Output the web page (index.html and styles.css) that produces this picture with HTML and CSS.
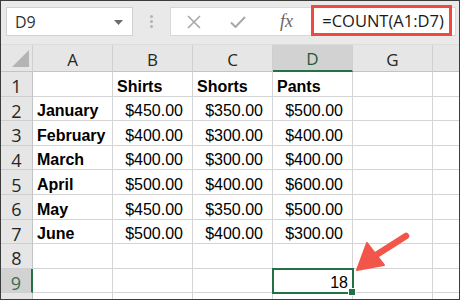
FILE: index.html
```html
<!DOCTYPE html>
<html>
<head>
<meta charset="utf-8">
<link rel="stylesheet" href="styles.css">
</head>
<body>
<div class="frame">
  <div class="toolbar">
    <div class="namebox">
      <span class="nb-text">D9</span>
      <svg class="nb-caret" width="9" height="5" viewBox="0 0 9 5"><path d="M0 0H9L4.5 5Z" fill="#6b6b6b"/></svg>
    </div>
    <div class="grip"><i></i><i></i><i></i></div>
    <div class="fbar">
      <svg class="ic ic-x" width="14" height="14" viewBox="0 0 14 14"><path d="M1 1L13 13M13 1L1 13" stroke="#a8a8a8" stroke-width="1.6" fill="none"/></svg>
      <svg class="ic ic-check" width="16" height="12" viewBox="0 0 16 12"><path d="M1 6.5L5.5 11L15 1" stroke="#a8a8a8" stroke-width="2" fill="none"/></svg>
      <span class="fx">fx</span>
      <div class="formula">=COUNT(A1:D7)</div>
    </div>
  </div>
  <div class="sheet">
    <div class="ch corner"><svg width="17" height="17" viewBox="0 0 17 17"><path d="M17 0V17H0Z" fill="#b4b4b4"/></svg></div>
    <div class="ch">A</div>
    <div class="ch">B</div>
    <div class="ch">C</div>
    <div class="ch sel-col">D</div>
    <div class="ch">G</div>
    <div class="ch last"></div>

    <div class="rh">1</div><div class="c"></div><div class="c b">Shirts</div><div class="c b">Shorts</div><div class="c b">Pants</div><div class="c"></div><div class="c last"></div>
    <div class="rh">2</div><div class="c b">January</div><div class="c n">$450.00</div><div class="c n">$350.00</div><div class="c n">$500.00</div><div class="c"></div><div class="c last"></div>
    <div class="rh">3</div><div class="c b">February</div><div class="c n">$400.00</div><div class="c n">$300.00</div><div class="c n">$400.00</div><div class="c"></div><div class="c last"></div>
    <div class="rh">4</div><div class="c b">March</div><div class="c n">$400.00</div><div class="c n">$300.00</div><div class="c n">$400.00</div><div class="c"></div><div class="c last"></div>
    <div class="rh">5</div><div class="c b">April</div><div class="c n">$500.00</div><div class="c n">$400.00</div><div class="c n">$600.00</div><div class="c"></div><div class="c last"></div>
    <div class="rh">6</div><div class="c b">May</div><div class="c n">$450.00</div><div class="c n">$350.00</div><div class="c n">$500.00</div><div class="c"></div><div class="c last"></div>
    <div class="rh">7</div><div class="c b">June</div><div class="c n">$500.00</div><div class="c n">$400.00</div><div class="c n">$300.00</div><div class="c"></div><div class="c last"></div>
    <div class="rh">8</div><div class="c"></div><div class="c"></div><div class="c"></div><div class="c"></div><div class="c"></div><div class="c last"></div>
    <div class="rh sel-row">9</div><div class="c"></div><div class="c"></div><div class="c"></div><div class="c active">18<span class="handle"></span></div><div class="c"></div><div class="c last"></div>
    <div class="rh"></div><div class="c"></div><div class="c"></div><div class="c"></div><div class="c"></div><div class="c"></div><div class="c last"></div>
  </div>
  <svg class="arrow" width="70" height="60" viewBox="0 0 70 60">
    <path d="M55 6L22 27" stroke="#f2564a" stroke-width="6.5" stroke-linecap="round" fill="none"/>
    <path d="M6 40L16 13L33 35Z" fill="#f2564a" stroke="#f2564a" stroke-width="2" stroke-linejoin="round"/>
  </svg>
</div>
</body>
</html>
```
FILE: styles.css
```css
* { box-sizing: border-box; }
html, body { margin: 0; padding: 0; background: #fff; }
.frame {
  position: relative;
  width: 460px;
  height: 300px;
  border: 1px solid #3c3c3c;
  overflow: hidden;
  font-family: "Liberation Sans", Arial, sans-serif;
}
.toolbar {
  height: 44px;
  background: #e9e9e9;
  display: flex;
  align-items: flex-start;
  padding: 6px 0 0 5px;
  border-bottom: 1px solid #dcdcdc;
}
.namebox {
  width: 127px;
  height: 29px;
  background: #fff;
  border: 1px solid #d2d2d2;
  display: flex;
  align-items: center;
  justify-content: space-between;
  padding: 0 9px 0 8px;
  font-family: "Open Sans", "Noto Sans", sans-serif;
  font-size: 16px;
  color: #333;
}
.nb-caret { margin-top: 1px; }
.grip {
  width: 37px;
  height: 29px;
  display: flex;
  flex-direction: column;
  align-items: center;
  justify-content: center;
  gap: 2px;
}
.grip i { width: 3px; height: 3px; background: #b3b3b3; border-radius: 50%; display: block; }
.fbar {
  width: 286px;
  height: 29px;
  background: #fff;
  border: 1px solid #d8d8d8;
  display: flex;
  align-items: center;
  position: relative;
}
.ic-x { margin-left: 16px; }
.ic-check { margin-left: 29px; }
.fx {
  margin-left: 34px;
  font-family: "Liberation Serif", serif;
  font-style: italic;
  font-size: 18px;
  color: #666;
}
.formula {
  position: absolute;
  left: 140px;
  top: -3px;
  width: 141px;
  height: 31px;
  border: 3px solid #ee4b3e;
  display: flex;
  align-items: center;
  justify-content: center;
  font-family: "Open Sans", "Noto Sans", sans-serif;
  font-size: 16.5px;
  color: #1a1a1a;
  background: #fff;
  padding: 0 0 1px 3px;
}
.sheet {
  display: grid;
  grid-template-columns: 32px repeat(5, 80px) 1fr;
  grid-template-rows: 27px repeat(10, 24.6px);
}
.ch {
  background: #e6e6e6;
  border-right: 1px solid #cfcfcf;
  border-bottom: 1px solid #c4c4c4;
  display: flex;
  align-items: center;
  justify-content: center;
  font-family: "Open Sans", "Noto Sans", sans-serif;
  font-size: 17px;
  color: #262626;
  padding-top: 2px;
}
.ch.corner { justify-content: flex-end; align-items: flex-end; padding: 0 3px 4px 0; }
.ch.last { border-right: none; }
.ch.sel-col { background: #d2d2d2; border-bottom: 2px solid #217346; color: #1e5c38; }
.rh {
  background: #e6e6e6;
  border-right: 1px solid #c4c4c4;
  border-bottom: 1px solid #cfcfcf;
  display: flex;
  align-items: center;
  justify-content: center;
  font-family: "Open Sans", "Noto Sans", sans-serif;
  font-size: 18px;
  color: #262626;
  padding-top: 5px;
}
.rh.sel-row { background: #d2d2d2; border-right: 2px solid #217346; color: #3c6e52; }
.c {
  border-right: 1px solid #d4d4d4;
  border-bottom: 1px solid #d4d4d4;
  display: flex;
  align-items: flex-end;
  font-size: 16px;
  line-height: 18px;
  color: #000;
  padding: 0 4px 0 4px;
  white-space: nowrap;
  position: relative;
}
.c.last { border-right: none; }
.c.b { font-weight: bold; }
.c.n { justify-content: flex-end; padding-right: 9px; }
.c.active {
  justify-content: flex-end;
  outline: 2px solid #217346;
  outline-offset: -1px;
  padding-right: 4px;
  z-index: 2;
}
.handle {
  position: absolute;
  right: -4px;
  bottom: -4px;
  width: 6px;
  height: 6px;
  background: #217346;
  border: 1px solid #fff;
  box-sizing: content-box;
}
.arrow {
  position: absolute;
  left: 350px;
  top: 229px;
  z-index: 5;
}
```
